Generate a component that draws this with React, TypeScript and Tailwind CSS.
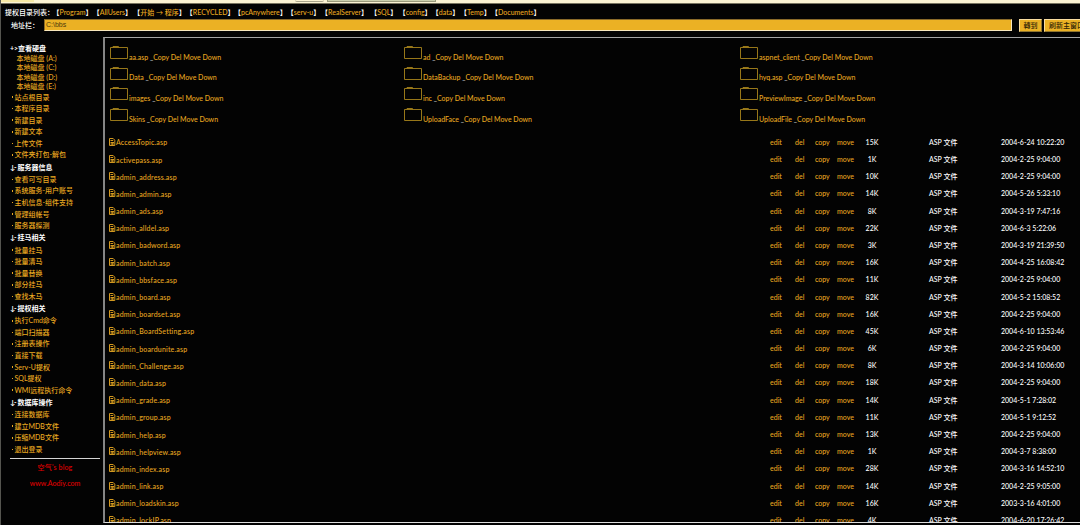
import React from 'react';

const shortcuts: [string, number][] = [
  ['Program', 40.2], ['AllUsers', 40.5], ['开始 → 程序', 52.6], ['RECYCLED', 48.2], ['pcAnywhere', 52.8], ['serv-u', 34.3],
  ['RealServer', 49.2], ['SQL', 28.5], ['config', 33], ['data', 28.3], ['Temp', 31], ['Documents', 50],
];

const disks = ['本地磁盘 (A:)', '本地磁盘 (C:)', '本地磁盘 (D:)', '本地磁盘 (E:)'];

const groups: { title: string; items: string[] }[] = [
  { title: '', items: ['站点根目录', '本程序目录', '新建目录', '新建文本', '上传文件', '文件夹打包-解包'] },
  { title: '服务器信息', items: ['查看可写目录', '系统服务-用户账号', '主机信息-组件支持', '管理组帐号', '服务器探测'] },
  { title: '挂马相关', items: ['批量挂马', '批量清马', '批量替换', '部分挂马', '查找木马'] },
  { title: '提权相关', items: ['执行Cmd命令', '端口扫描器', '注册表操作', '直接下载', 'Serv-U提权', 'SQL提权', 'WMI远程执行命令'] },
  { title: '数据库操作', items: ['连接数据库', '建立MDB文件', '压缩MDB文件', '退出登录'] },
];

const folders = [
  ['aa.asp', 'ad', 'aspnet_client'],
  ['Data', 'DataBackup', 'hyq.asp'],
  ['images', 'inc', 'PreviewImage'],
  ['Skins', 'UploadFace', 'UploadFile'],
];

const files: [string, string, string][] = [
  ['AccessTopic.asp', '15K', '2004-6-24 10:22:20'],
  ['activepass.asp', '1K', '2004-2-25 9:04:00'],
  ['admin_address.asp', '10K', '2004-2-25 9:04:00'],
  ['admin_admin.asp', '14K', '2004-5-26 5:33:10'],
  ['admin_ads.asp', '8K', '2004-3-19 7:47:16'],
  ['admin_alldel.asp', '22K', '2004-6-3 5:22:06'],
  ['admin_badword.asp', '3K', '2004-3-19 21:39:50'],
  ['admin_batch.asp', '16K', '2004-4-25 16:08:42'],
  ['admin_bbsface.asp', '11K', '2004-2-25 9:04:00'],
  ['admin_board.asp', '82K', '2004-5-2 15:08:52'],
  ['admin_boardset.asp', '16K', '2004-2-25 9:04:00'],
  ['admin_BoardSetting.asp', '45K', '2004-6-10 13:53:46'],
  ['admin_boardunite.asp', '6K', '2004-2-25 9:04:00'],
  ['admin_Challenge.asp', '8K', '2004-3-14 10:06:00'],
  ['admin_data.asp', '18K', '2004-2-25 9:04:00'],
  ['admin_grade.asp', '14K', '2004-5-1 7:28:02'],
  ['admin_group.asp', '11K', '2004-5-1 9:12:52'],
  ['admin_help.asp', '13K', '2004-2-25 9:04:00'],
  ['admin_helpview.asp', '1K', '2004-3-7 8:38:00'],
  ['admin_index.asp', '28K', '2004-3-16 14:52:10'],
  ['admin_link.asp', '14K', '2004-2-25 9:05:00'],
  ['admin_loadskin.asp', '16K', '2003-3-16 4:01:00'],
  ['admin_lockIP.asp', '4K', '2004-6-20 17:26:42'],
];

function FolderIcon() {
  return (
    <svg className="h-[13px] w-[18px] shrink-0" viewBox="0 0 18 13" fill="none" stroke="#a8841c" strokeWidth="0.9">
      <path d="M0.5 1.5H17.5V12.5H0.5ZM3 1.5V0.5H8.5V1.5" />
    </svg>
  );
}

function FileIcon() {
  return (
    <svg className="h-[9px] w-[7px] shrink-0" viewBox="0 0 7 9" fill="none" stroke="#d2981f" strokeWidth="1">
      <path d="M0.5 0.5H4.2L5.8 2.2V7.5H0.5ZM1.5 2.5H4.2M1.5 4.5H5M1.5 6H5M3.2 4V7" />
    </svg>
  );
}

export default function App() {
  return (
    <div className="flex h-[525px] w-[1080px] flex-col overflow-hidden border-l border-[#55554f] bg-[#030303] font-['Lato','Noto_Sans_CJK_SC',sans-serif] text-[7px] leading-none font-medium whitespace-nowrap text-[#e9a820]">
      <div className="flex h-[4px] shrink-0 border-b border-[#77735f] bg-[#fbf3d3]">
        <div className="h-[2px] w-[33px] bg-[#f6e8a4]" />
        <div className="ml-[261px] h-[2px] w-[29px] rounded-b-sm border-b border-[#a9a58c]" />
        <div className="ml-[3px] h-[2px] w-[109px] border-x border-b border-[#9a9a7c] bg-[#ccd0ae]" />
      </div>

      <div className="flex h-[15px] shrink-0 items-center pt-[2px] pl-[4px]">
        <span className="w-[51px] text-white">提权目录列表：</span>
        {shortcuts.map(([name, width]) => (
          <span key={name} className="flex shrink-0" style={{ width }}>
            <b className="-ml-[3.5px] text-white">【</b>
            <span>{name}</span>
            <b className="text-white">】</b>
          </span>
        ))}
      </div>

      <div className="flex h-[13px] shrink-0 items-start pl-[10px]">
        <span className="w-[33px] shrink-0 pt-[3px] text-white">地址栏：</span>
        <div className="h-[12px] w-[968px] shrink-0 border border-t-[#8a6a28] border-r-[#f8e7bd] border-b-[#f8e7bd] border-l-[#8a6a28] bg-[#ebb124] pt-px pl-px font-['Liberation_Sans'] text-[7px] font-normal text-[#4c3a0c]">C:\bbs</div>
        <button className="ml-[7px] flex h-[13px] w-[23px] shrink-0 items-center justify-center border border-t-[#f9dda0] border-r-[#91752e] border-b-[#91752e] border-l-[#f9dda0] bg-[#ebb124] text-[#302405]">轉到</button>
        <button className="ml-[2px] flex h-[13px] w-[50px] shrink-0 items-center border border-t-[#f9dda0] border-b-[#91752e] border-l-[#f9dda0] bg-[#ebb124] pl-[4px] text-[#302405]">刷新主窗口</button>
      </div>

      <div className="flex min-h-0 flex-1 pt-[5px]">
        <aside className="w-[102px] shrink-0 pt-[5.5px] pl-[9px]">
          <div className="flex h-[11.6px] items-center font-bold text-white">+&gt;查看硬盘</div>
          {disks.map((d) => (
            <div key={d} className="flex h-[9.2px] items-center pl-[6.5px]">{d}</div>
          ))}
          {groups.map((g) => (
            <div key={g.title}>
              {g.title ? (
                <div className="flex h-[13px] items-center font-bold text-white">
                  <span className="w-[7.5px] tracking-[-1.2px]">↓-</span>{g.title}
                </div>
              ) : <div className="h-[0.5px]" />}
              {g.items.map((item) => (
                <div key={item} className="flex h-[11.55px] items-center">
                  <span className="mr-[1.5px] ml-[1.5px] h-[1.5px] w-[1.5px] bg-[#e9a820]" />{item}
                </div>
              ))}
            </div>
          ))}
          <div className="mt-[3px] h-px w-[90px] bg-[#d5d5d5]" />
          <div className="flex w-[90px] flex-col items-center pt-[4.5px] text-[#e00000]">
            <span className="flex h-[8px] items-center tracking-[0.15px]">空气's blog</span>
            <span className="mt-[8px] flex h-[8px] items-center">www.Aodiy.com</span>
          </div>
        </aside>

        <main className="mb-[2px] min-w-0 flex-1 overflow-hidden border-t border-b border-l-2 border-t-[#a5a5a5] border-b-[#dedede] border-l-[#858585]">
          <div className="pt-[8px] pl-[5px]">
            {folders.map((row) => (
              <div key={row[0]} className="grid h-[20.7px] grid-cols-[294px_336px_auto]">
                {row.map((name) => (
                  <div key={name} className="flex items-start">
                    <FolderIcon />
                    <span className="pt-[7.5px] pl-[1px]">{name} <span className="text-[#c7ced5]">_</span>Copy Del Move Down</span>
                  </div>
                ))}
              </div>
            ))}
          </div>
          <div className="pt-[5px] pl-[4px]">
            {files.map(([name, size, date]) => (
              <div key={name} className="grid h-[17.2px] grid-cols-[661px_25px_20px_22px_23px_24px_45px_72px_auto] items-center">
                <div className="flex items-center tracking-[0.18px]"><FileIcon /><span className="pt-px">{name}</span></div>
                <span>edit</span>
                <span>del</span>
                <span>copy</span>
                <span>move</span>
                <span className="text-center text-white">{size}</span>
                <span />
                <span className="text-white">ASP 文件</span>
                <span className="text-white">{date}</span>
              </div>
            ))}
          </div>
        </main>
      </div>
    </div>
  );
}
